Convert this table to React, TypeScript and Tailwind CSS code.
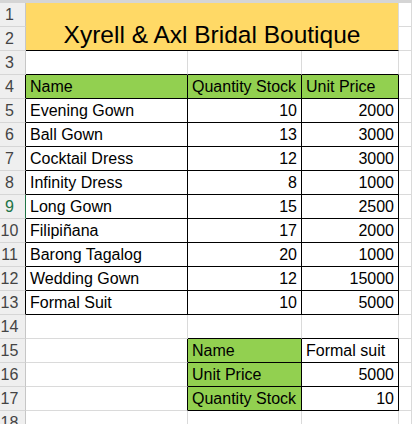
import { type ReactNode } from 'react';
import clsx from 'clsx';

type Item = [string, number, number];

const items: Item[] = [
  ['Evening Gown', 10, 2000],
  ['Ball Gown', 13, 3000],
  ['Cocktail Dress', 12, 3000],
  ['Infinity Dress', 8, 1000],
  ['Long Gown', 15, 2500],
  ['Filipiñana', 17, 2000],
  ['Barong Tagalog', 20, 1000],
  ['Wedding Gown', 12, 15000],
  ['Formal Suit', 10, 5000],
];

type CellProps = {
  w: string;
  right?: boolean;
  bottom?: boolean;
  end?: boolean;
  bg?: string;
  children?: ReactNode;
};

function Cell({ w, right, bottom, end, bg, children }: CellProps) {
  return (
    <div
      className={clsx(
        'flex h-6 shrink-0 items-end overflow-hidden whitespace-nowrap border-r border-b pb-[3px] text-[16px] leading-none text-black',
        w,
        right ? 'border-r-black' : 'border-r-[#dadada]',
        bottom ? 'border-b-black' : 'border-b-[#dadada]',
        end ? 'justify-end pr-[4px]' : 'pl-[4px]',
        bg,
      )}
    >
      {children}
    </div>
  );
}

function RowHead({ n, edge }: { n: number; edge?: 'black' | 'green' }) {
  return (
    <div
      className={clsx(
        'flex h-6 w-[26px] shrink-0 items-end justify-center border-r border-b border-b-[#d6d6d6] bg-[#efefef] pr-[6px] pb-[3px] text-[16px] leading-none',
        edge === 'black' && 'border-r-black text-[#444]',
        edge === 'green' && 'border-r-[#217346] text-[#217346]',
        !edge && 'border-r-[#c6c6c6] text-[#444]',
      )}
    >
      {n}
    </div>
  );
}

type RowProps = {
  n: number;
  edge?: 'black' | 'green';
  children: ReactNode;
};

function Row({ n, edge, children }: RowProps) {
  return (
    <div className="flex">
      <RowHead n={n} edge={edge} />
      {children}
      <Cell w="flex-1" />
    </div>
  );
}

export default function App() {
  return (
    <div className="h-[424px] w-[412px] overflow-hidden bg-white font-['Liberation_Sans',Arial,sans-serif]">
      <div className="h-[3px] bg-[#d5d5d5]" />

      {/* title, rows 1-2 merged over A:C */}
      <div className="flex">
        <div className="flex flex-col">
          <RowHead n={1} />
          <RowHead n={2} />
        </div>
        <div className="flex h-12 w-[373px] shrink-0 items-end justify-center border-r border-b border-r-[#dadada] border-b-black bg-[#ffd966] pb-[3px] text-[24.5px] leading-none text-black">
          Xyrell &amp; Axl Bridal Boutique
        </div>
        <div className="flex flex-1 flex-col">
          <Cell w="w-full" />
          <Cell w="w-full" />
        </div>
      </div>

      <Row n={3}>
        <Cell w="w-[162px]" bottom />
        <Cell w="w-[114px]" bottom />
        <Cell w="w-[97px]" bottom />
      </Row>

      <Row n={4} edge="black">
        <Cell w="w-[162px]" right bottom bg="bg-[#92d050]">Name</Cell>
        <Cell w="w-[114px]" right bottom bg="bg-[#92d050]">Quantity Stock</Cell>
        <Cell w="w-[97px]" right bottom bg="bg-[#92d050]">Unit Price</Cell>
      </Row>

      {items.map(([name, qty, price], i) => (
        <Row key={name} n={i + 5} edge={i + 5 === 9 ? 'green' : 'black'}>
          <Cell w="w-[162px]" right bottom>{name}</Cell>
          <Cell w="w-[114px]" right bottom end>{qty}</Cell>
          <Cell w="w-[97px]" right bottom end>{price}</Cell>
        </Row>
      ))}

      <Row n={14}>
        <Cell w="w-[162px]" />
        <Cell w="w-[114px]" bottom />
        <Cell w="w-[97px]" bottom />
      </Row>

      {/* lookup block B15:C17 */}
      <Row n={15}>
        <Cell w="w-[162px]" right />
        <Cell w="w-[114px]" right bottom bg="bg-[#92d050]">Name</Cell>
        <Cell w="w-[97px]" right bottom>Formal suit</Cell>
      </Row>
      <Row n={16}>
        <Cell w="w-[162px]" right />
        <Cell w="w-[114px]" right bottom bg="bg-[#92d050]">Unit Price</Cell>
        <Cell w="w-[97px]" right bottom end>5000</Cell>
      </Row>
      <Row n={17}>
        <Cell w="w-[162px]" right />
        <Cell w="w-[114px]" right bottom bg="bg-[#92d050]">Quantity Stock</Cell>
        <Cell w="w-[97px]" right bottom end>10</Cell>
      </Row>

      <Row n={18}>
        <Cell w="w-[162px]" />
        <Cell w="w-[114px]" />
        <Cell w="w-[97px]" />
      </Row>
    </div>
  );
}
